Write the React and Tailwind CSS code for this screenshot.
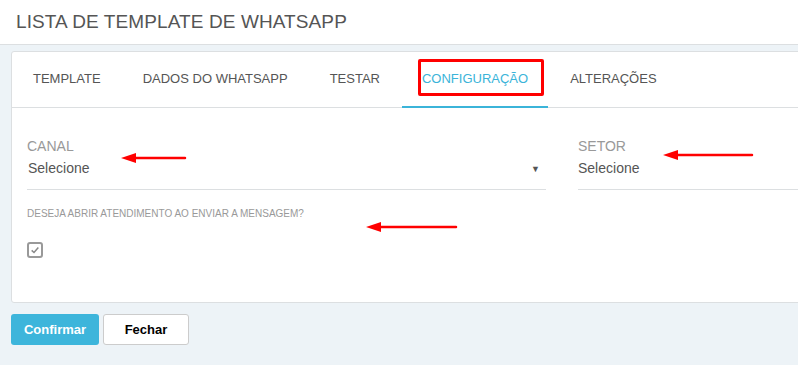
import React from "react";

const tabs = ["TEMPLATE", "DADOS DO WHATSAPP", "TESTAR", "CONFIGURAÇÃO", "ALTERAÇÕES"];

function Arrow({ x1, x2, y }) {
  // annotation arrow pointing left, drawn over the page
  const w = x2 - x1;
  return (
    <svg
      className="absolute pointer-events-none"
      style={{ left: x1, top: y - 6, width: w + 2, height: 12 }}
      viewBox={`0 0 ${w + 2} 12`}
    >
      <line x1="12" y1="6" x2={w} y2="6" stroke="#f00" strokeWidth="2.5" strokeLinecap="round" />
      <polygon points="0,6 15,1 15,11" fill="#f00" />
    </svg>
  );
}

export default function App() {
  return (
    <div
      className="relative w-full h-[365px] overflow-hidden bg-[#edf3f7]"
      style={{ fontFamily: "'Liberation Sans', Arial, sans-serif" }}
    >
      <header className="h-[45px] bg-white border-b border-[#dcdfe1] flex items-center px-4">
        <h1 className="text-[19px] text-[#555] tracking-[0.1px]">LISTA DE TEMPLATE DE WHATSAPP</h1>
      </header>

      <div className="pl-[11px] pt-[6px]">
        <div className="w-[820px] h-[252px] bg-white border border-[#dcdfe1] rounded-[3px]">
          <nav className="flex h-[56px] border-b border-[#dcdfe1] pl-[1px]">
            {tabs.map((t, i) => (
              <div
                key={t}
                className={
                  "mr-[2px] px-5 flex items-center text-[13px] border-b-2 -mb-px " +
                  (i === 3 ? "border-[#3bb4d9] text-[#3bb4d9]" : "border-transparent text-[#555]")
                }
              >
                {t}
              </div>
            ))}
          </nav>

          <div className="px-[15px] pt-[28px]">
            <div className="flex gap-8">
              <div className="w-[519px] shrink-0 border-b border-[#dcdfe1] h-[54px]">
                <div className="text-[14px] text-[#999] leading-5">CANAL</div>
                <div className="flex items-center justify-between mt-[2px] pr-[6px]">
                  <span className="text-[14px] text-[#555] leading-5 pl-[1px]">Selecione</span>
                  <span className="text-[9px] text-[#555] mt-[3px]">▼</span>
                </div>
              </div>
              <div className="w-[519px] shrink-0 border-b border-[#dcdfe1] h-[54px]">
                <div className="text-[14px] text-[#999] leading-5">SETOR</div>
                <div className="mt-[2px] text-[14px] text-[#555] leading-5">Selecione</div>
              </div>
            </div>

            <div className="mt-[18px] text-[10px] text-[#999] leading-3">
              DESEJA ABRIR ATENDIMENTO AO ENVIAR A MENSAGEM?
            </div>
            <div className="mt-[22px] w-4 h-4 border-2 border-[#999] rounded-[3px] flex items-center justify-center">
              <svg viewBox="0 0 12 12" className="w-[10px] h-[10px]">
                <path d="M2 6.5 L4.8 9 L10 3" fill="none" stroke="#888" strokeWidth="1.8" />
              </svg>
            </div>
          </div>
        </div>

        <div className="flex gap-[4px] mt-[11px]">
          <button className="w-[88px] h-[31px] rounded-[3px] bg-[#3db5db] text-white text-[13px] font-bold">
            Confirmar
          </button>
          <button className="w-[86px] h-[31px] rounded-[3px] bg-white border border-[#ccc] text-black text-[13px] font-bold">
            Fechar
          </button>
        </div>
      </div>

      {/* annotations */}
      <div className="absolute left-[418px] top-[59px] w-[126px] h-[37px] border-[3px] border-[#f00] rounded-[2px] pointer-events-none" />
      <Arrow x1={121} x2={185} y={158} />
      <Arrow x1={663} x2={752} y={155} />
      <Arrow x1={366} x2={456} y={227} />
    </div>
  );
}
